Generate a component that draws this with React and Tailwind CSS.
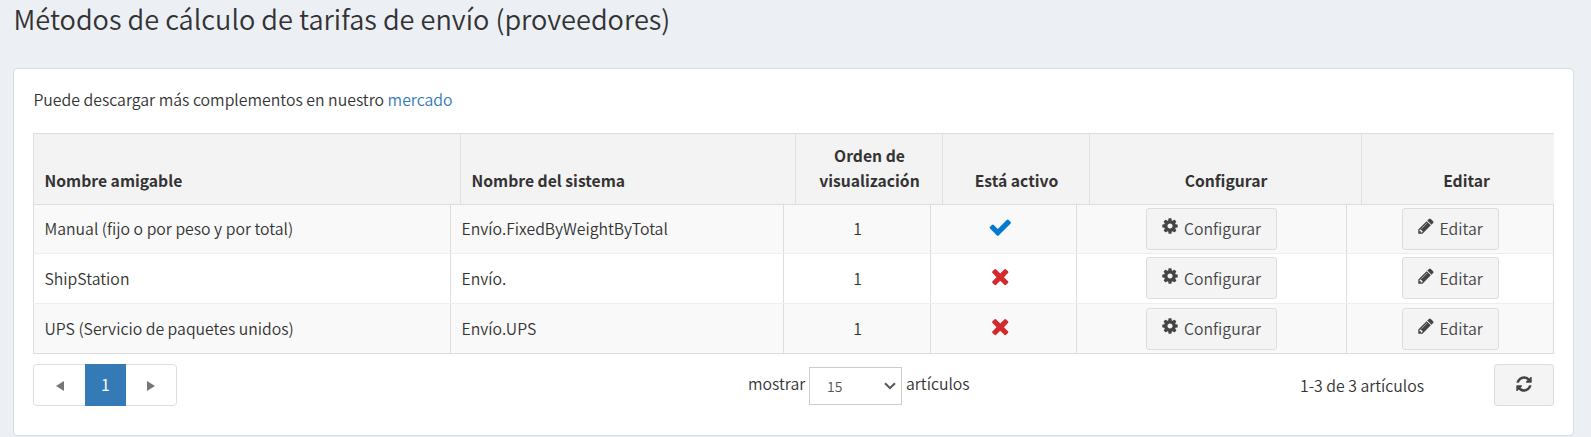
const ICONS = {
  check:
    'M1671 566q0 40-28 68l-724 724-136 136q-28 28-68 28t-68-28l-136-136-362-362q-28-28-28-68t28-68l136-136q28-28 68-28t68 28l294 295 656-657q28-28 68-28t68 28l136 136q28 28 28 68z',
  times:
    'M1490 1322q0 40-28 68l-136 136q-28 28-68 28t-68-28l-294-294-294 294q-28 28-68 28t-68-28l-136-136q-28-28-28-68t28-68l294-294-294-294q-28-28-28-68t28-68l136-136q28-28 68-28t68 28l294 294 294-294q28-28 68-28t68 28l136 136q28 28 28 68t-28 68l-294 294 294 294q28 28 28 68z',
  cog: 'M1152 896q0-106-75-181t-181-75-181 75-75 181 75 181 181 75 181-75 75-181zm512-109v222q0 12-8 23t-20 13l-185 28q-19 54-39 91 35 50 107 138 10 12 10 25t-9 23q-27 37-99 108t-94 71q-12 0-26-9l-138-108q-44 23-91 38-16 136-29 186-7 28-36 28h-222q-14 0-24.5-8.5t-11.5-21.5l-28-184q-49-16-90-37l-141 107q-10 9-25 9-14 0-25-11-126-114-165-168-7-10-7-23 0-12 8-23 15-21 51-66.5t54-70.5q-27-50-41-99l-183-27q-13-2-21-12.5t-8-23.5v-222q0-12 8-23t19-13l186-28q14-46 39-92-40-57-107-138-10-12-10-24 0-10 9-23 26-36 98.5-107.5t94.5-71.5q13 0 26 10l138 107q44-23 91-38 16-136 29-186 7-28 36-28h222q14 0 24.5 8.5t11.5 21.5l28 184q49 16 90 37l142-107q9-9 24-9 13 0 25 10 129 119 165 170 7 8 7 22 0 12-8 23-15 21-51 66.5t-54 70.5q26 50 41 98l183 28q13 2 21 12.5t8 23.5z',
  pencil:
    'M491 1536l91-91-235-235-91 91v107h128v128h107zm523-928q0-22-22-22-10 0-17 7l-542 542q-7 7-7 17 0 22 22 22 10 0 17-7l542-542q7-7 7-17zm-54-192l416 416-832 832h-416v-416zm683 96q0 53-37 90l-166 166-416-416 166-165q36-38 90-38 53 0 91 38l235 234q37 39 37 91z',
  refresh:
    'M1639 1056q0 5-1 7-64 268-268 434.5t-478 166.5q-146 0-282.5-55t-243.5-157l-129 129q-19 19-45 19t-45-19-19-45v-448q0-26 19-45t45-19h448q26 0 45 19t19 45-19 45l-137 137q71 66 161 102t187 36q134 0 250-65t186-179q11-17 53-117 8-23 30-23h192q13 0 22.5 9.5t9.5 22.5zm25-800v448q0 26-19 45t-45 19h-448q-26 0-45-19t-19-45 19-45l138-138q-148-137-349-137-134 0-250 65t-186 179q-11 17-53 117-8 23-30 23h-199q-13 0-22.5-9.5t-9.5-22.5v-7q65-268 270-434.5t480-166.5q146 0 284 55.5t245 156.5l130-129q19-19 45-19t45 19 19 45z',
};

function Icon({ name, className }) {
  return (
    <svg viewBox="0 0 1792 1792" fill="currentColor" className={className}>
      <path d={ICONS[name]} />
    </svg>
  );
}

function ActionButton({ icon, className, children }) {
  return (
    <button
      className={`flex h-[42px] items-center gap-[5px] rounded-[3px] border border-[#ddd] bg-[#f4f4f4] pl-[14px] text-[#444] ${className}`}
    >
      <Icon name={icon} className="mb-[5px] size-[18px] shrink-0" />
      <span>{children}</span>
    </button>
  );
}

const ROWS = [
  { name: 'Manual (fijo o por peso y por total)', system: 'Envío.FixedByWeightByTotal', active: true },
  { name: 'ShipStation', system: 'Envío.', active: false },
  { name: 'UPS (Servicio de paquetes unidos)', system: 'Envío.UPS', active: false },
];

const ROW_STYLES = [
  'h-[48px] bg-[#f9f9f9] *:pb-px',
  'h-[50px] border-t border-[#eee] bg-white *:pb-px',
  'h-[50px] border-t border-[#eee] bg-[#f9f9f9]',
];

const headCell = 'border-l border-[#e0e0e0] flex items-end pb-[11px]';
const cell = 'border-l border-[#ddd] flex items-center';

export default function App() {
  return (
    <div className="h-[437px] overflow-hidden bg-[#ecf0f5] pl-[13px] pr-[17px] font-['Noto_Sans_CJK_SC',sans-serif] text-[15.8px] leading-[25px] font-[350] text-[#333]">
      <h1 className="h-[68px] pl-[0.5px] text-[27.15px] leading-[38px] whitespace-nowrap">
        Métodos de cálculo de tarifas de envío (proveedores)
      </h1>
      <main className="h-[368px] rounded-[4px] border border-[#d6dde3] bg-white px-[19px] pt-[18px]">
        <p className="h-[46px] pl-[0.4px] text-[15.83px] whitespace-nowrap">
          Puede descargar más complementos en nuestro <a className="text-[#337ab7]">mercado</a>
        </p>

        <div className="grid h-[72px] grid-cols-[427px_335px_147px_147px_272px_1fr] border-t border-b border-[#ddd] bg-[#f3f3f3] text-[15.7px] font-bold">
          <div className={`${headCell} pl-[10.5px]`}>Nombre amigable</div>
          <div className={`${headCell} pl-[10.5px]`}>Nombre del sistema</div>
          <div className={`${headCell} justify-center pl-px text-center`}>
            Orden de
            <br />
            visualización
          </div>
          <div className={`${headCell} justify-center pl-px`}>Está activo</div>
          <div className={`${headCell} justify-center pl-px`}>Configurar</div>
          <div className={`${headCell} justify-center pl-[17px]`}>Editar</div>
        </div>

        <div className="border-r border-b border-[#ddd]">
          {ROWS.map((row, i) => (
            <div
              key={row.name}
              className={`grid grid-cols-[417px_333px_147px_146px_270px_1fr] ${ROW_STYLES[i]}`}
            >
              <div className={`${cell} pl-[10.5px]`}>{row.name}</div>
              <div className={`${cell} pl-[10.5px]`}>{row.system}</div>
              <div className={`${cell} justify-center pl-px`}>1</div>
              <div className={`${cell} justify-center pr-[6px]`}>
                <Icon
                  name={row.active ? 'check' : 'times'}
                  className={row.active ? 'mb-[3px] size-[24.5px] text-[#007acc]' : 'mb-[4px] size-[24.5px] text-[#d42a2e]'}
                />
              </div>
              <div className={`${cell} justify-center`}>
                <ActionButton icon="cog" className="w-[131px]">Configurar</ActionButton>
              </div>
              <div className={`${cell} justify-center`}>
                <ActionButton icon="pencil" className="w-[97px]">Editar</ActionButton>
              </div>
            </div>
          ))}
        </div>

        <footer className="mt-[10px] flex h-[42px] items-center">
          <nav className="flex h-full w-[144px] items-stretch overflow-hidden rounded-[4px]">
            <button className="flex w-[52px] items-center justify-center rounded-l-[4px] border border-r-0 border-[#ddd] pt-[2px] text-[#777]">
              <svg viewBox="0 0 8 10" className="h-[10px] w-[8px]" fill="currentColor">
                <path d="M8 0v10L0 5z" />
              </svg>
            </button>
            <button className="flex w-[41px] items-center justify-center bg-[#337ab7] pb-[2px] font-normal text-white">1</button>
            <button className="flex flex-1 items-center justify-center rounded-r-[4px] border border-l-0 border-[#ddd] pt-[2px] pr-px text-[#777]">
              <svg viewBox="0 0 8 10" className="h-[10px] w-[8px]" fill="currentColor">
                <path d="M0 0v10l8-5z" />
              </svg>
            </button>
          </nav>
          <div className="ml-[571px] flex items-center whitespace-nowrap">
            <span className="mb-[4px] w-[61px]">mostrar</span>
            <div className="mt-px flex h-[38px] w-[93px] items-center justify-between border border-[#ccc] bg-white pr-[5px] pl-[17px] text-[14px] text-[#555]">
              <span className="pt-px">15</span>
              <svg viewBox="0 0 12 8" className="h-[8px] w-[12px]" fill="none" stroke="currentColor" strokeWidth="2">
                <path d="M1 1.2l5 5 5-5" />
              </svg>
            </div>
            <span className="mb-[4px] ml-[4px]">artículos</span>
          </div>
          <span className="ml-auto w-[194px] whitespace-nowrap">1-3 de 3 artículos</span>
          <button className="flex h-[42px] w-[60px] items-center justify-center rounded-[3px] border border-[#ddd] bg-[#f4f4f4] pb-[3px] text-[#444]">
            <Icon name="refresh" className="size-[18px]" />
          </button>
        </footer>
      </main>
    </div>
  );
}
